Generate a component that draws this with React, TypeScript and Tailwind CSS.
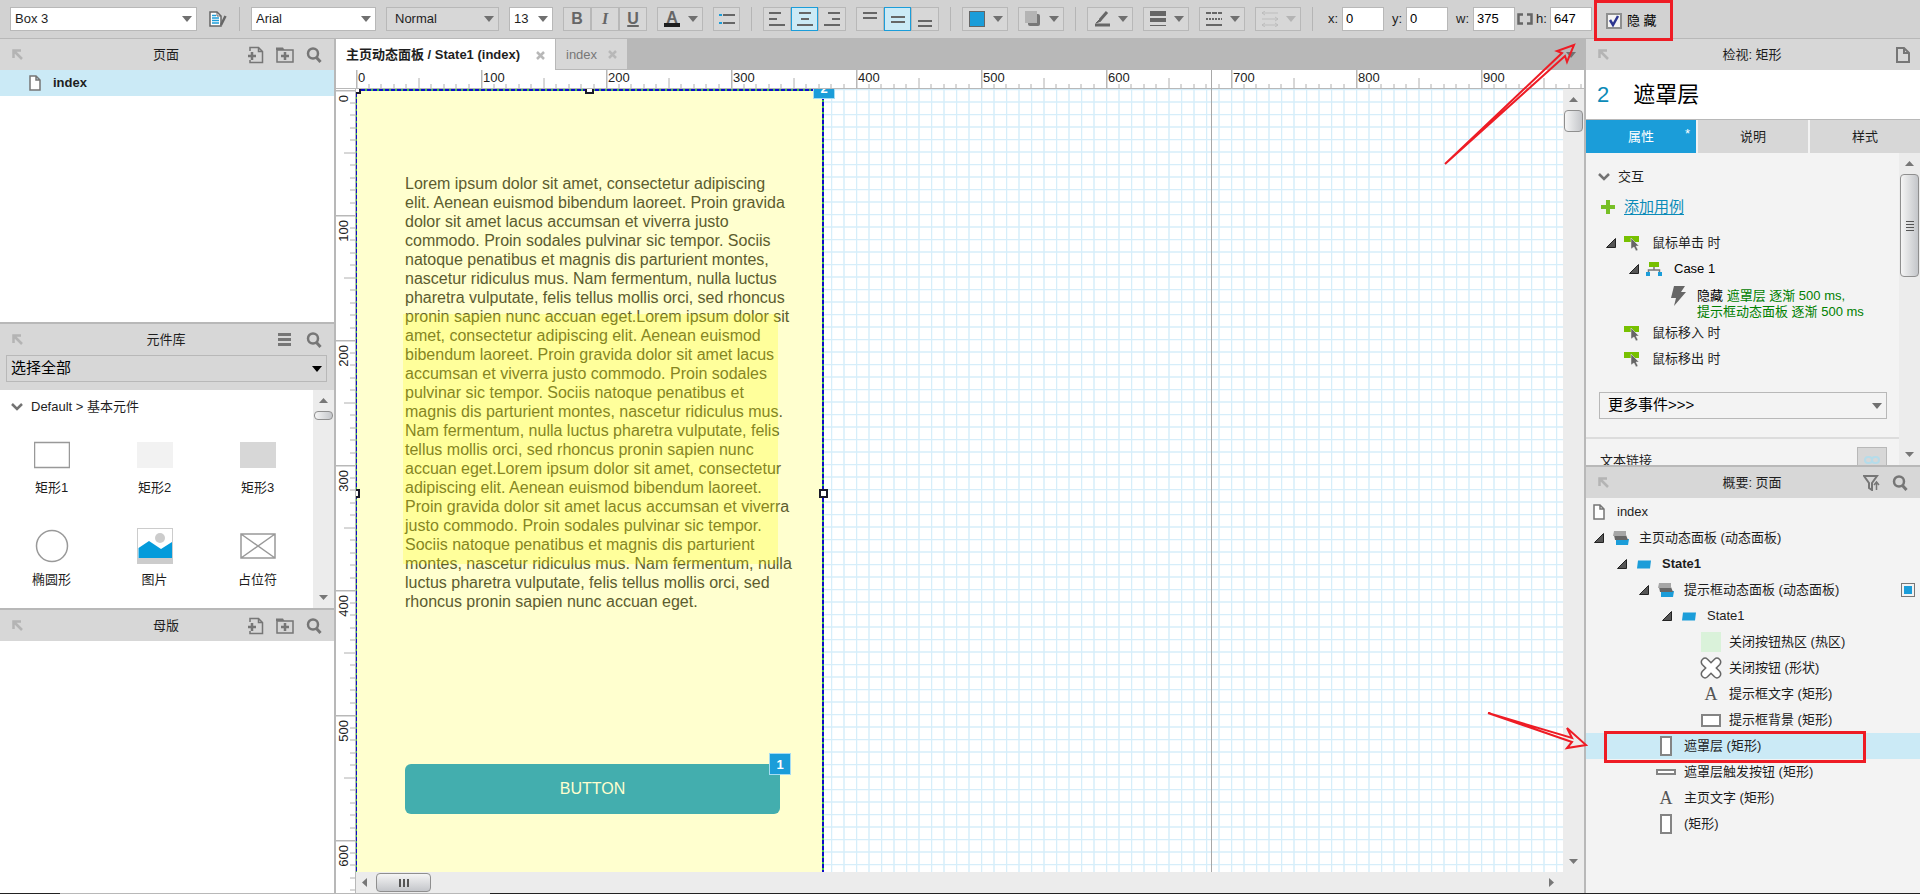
import { ReactNode } from "react";

const TEXT_LINES = [
	"Lorem ipsum dolor sit amet, consectetur adipiscing",
	"elit. Aenean euismod bibendum laoreet. Proin gravida",
	"dolor sit amet lacus accumsan et viverra justo",
	"commodo. Proin sodales pulvinar sic tempor. Sociis",
	"natoque penatibus et magnis dis parturient montes,",
	"nascetur ridiculus mus. Nam fermentum, nulla luctus",
	"pharetra vulputate, felis tellus mollis orci, sed rhoncus",
	"pronin sapien nunc accuan eget.Lorem ipsum dolor sit",
	"amet, consectetur adipiscing elit. Aenean euismod",
	"bibendum laoreet. Proin gravida dolor sit amet lacus",
	"accumsan et viverra justo commodo. Proin sodales",
	"pulvinar sic tempor. Sociis natoque penatibus et",
	"magnis dis parturient montes, nascetur ridiculus mus.",
	"Nam fermentum, nulla luctus pharetra vulputate, felis",
	"tellus mollis orci, sed rhoncus pronin sapien nunc",
	"accuan eget.Lorem ipsum dolor sit amet, consectetur",
	"adipiscing elit. Aenean euismod bibendum laoreet.",
	"Proin gravida dolor sit amet lacus accumsan et viverra",
	"justo commodo. Proin sodales pulvinar sic tempor.",
	"Sociis natoque penatibus et magnis dis parturient",
	"montes, nascetur ridiculus mus. Nam fermentum, nulla",
	"luctus pharetra vulputate, felis tellus mollis orci, sed",
	"rhoncus pronin sapien nunc accuan eget.",
];

/* ---------- icons ---------- */

function Caret({ className = "fill-[#707070]" }: { className?: string }) {
	return (
		<svg width="10" height="6" viewBox="0 0 10 6" className={className}>
			<path d="M0 0h10L5 6z" />
		</svg>
	);
}

function PinIcon() {
	return (
		<svg width="11" height="11" viewBox="0 0 11 11" fill="none" stroke="#b4b4b4" strokeWidth="2.5">
			<path d="M1.5 9V1.5H9M2 2l8 8" />
		</svg>
	);
}

function SearchIcon() {
	return (
		<svg width="16" height="16" viewBox="0 0 16 16" fill="none" stroke="#767676">
			<circle cx="7" cy="6.5" r="5" strokeWidth="2.5" />
			<path d="M10.5 10.5l4 4.5" strokeWidth="3" />
		</svg>
	);
}

function AddPageIcon() {
	return (
		<svg width="16" height="18" viewBox="0 0 16 18" fill="none" stroke="#767676">
			<path d="M2 5V1.5h8.5l4 4v11H2V14M10.5 1.5v4h4" strokeWidth="1.5" />
			<path d="M0 10h8M4 6v8" strokeWidth="2.5" />
		</svg>
	);
}

function AddFolderIcon() {
	return (
		<svg width="18" height="16" viewBox="0 0 18 16" fill="none" stroke="#767676">
			<path d="M1 15V3h16v12z" strokeWidth="1.5" />
			<path d="M0 .5h7L8.500 3H0z" fill="#767676" stroke="none" />
			<path d="M5 9h8M9 5v8" strokeWidth="2.5" />
		</svg>
	);
}

function PageIcon() {
	return (
		<svg width="12" height="16" viewBox="0 0 12 16" fill="#fff" stroke="#767676" strokeWidth="1.5">
			<path d="M1 1h6l4 4v10H1zM7 1v4h4" />
		</svg>
	);
}

function Triangle() {
	return (
		<svg width="10" height="10" viewBox="0 0 10 10">
			<path d="M.5 9.5h9V.5z" fill="#555" stroke="#222" />
		</svg>
	);
}

function Chevron() {
	return (
		<svg width="12" height="8" viewBox="0 0 12 8" fill="none" stroke="#737373" strokeWidth="2.5">
			<path d="M1 1l5 5 5-5" />
		</svg>
	);
}

function EventIcon() {
	return (
		<svg width="16" height="16" viewBox="0 0 16 16">
			<path d="M0 1h15v6H0z" fill="#77c000" />
			<path d="M7 3l8 8h-3l2 4-2 1-2-4-3 2z" fill="#666" stroke="#f3f3f3" strokeWidth=".5" />
		</svg>
	);
}

function PanelIcon() {
	return (
		<svg width="16" height="14" viewBox="0 0 16 14">
			<path d="M3 8h13l-1 6H3z" fill="#1b9dd9" />
			<path d="M1 4h12l2 5H2z" fill="#666" />
			<path d="M1 0h12v5H0z" fill="#a6a6a6" />
		</svg>
	);
}

function StateIcon() {
	return (
		<svg width="14" height="9" viewBox="0 0 14 9">
			<path d="M1 .5h13l-1 8H0z" fill="#1b9dd9" />
		</svg>
	);
}

function CrossShape() {
	return (
		<svg width="22" height="22" viewBox="0 0 22 22">
			<path
				d="M7.500 2.200L11 5.700l3.500-3.500c3.300-3 8 1.300 5.300 5.300L16.300 11l3.500 3.500c2.700 4-2 8.300-5.300 5.300L11 16.300l-3.500 3.500c-3.300 3-8-1.300-5.300-5.300L5.700 11 2.200 7.500c-2.700-4 2-8.300 5.300-5.300z"
				fill="#fff"
				stroke="#666"
				strokeWidth="1.5"
			/>
		</svg>
	);
}

function LetterA() {
	return <span className="font-['Liberation_Serif',serif] text-lg leading-5 text-[#555]">A</span>;
}

function RectIcon({ size }: { size: string }) {
	return <i className={"border-2 border-[#848484] bg-white " + size} />;
}

/* ---------- small parts ---------- */

type SelectProps = {
	label: string;
	value: string;
	box: string;
	caret?: string;
};

function Select({ label, value, box, caret }: SelectProps) {
	return (
		<div className={"relative " + box}>
			<select
				aria-label={label}
				className="block w-full h-full appearance-none bg-transparent pl-1 pr-4 outline-none"
			>
				<option>{value}</option>
			</select>
			<span className="absolute right-1 top-0 h-full flex items-center pointer-events-none">
				<Caret className={caret} />
			</span>
		</div>
	);
}

function Divider() {
	return <div className="w-px h-6 mx-px bg-[#b5b5b5]" />;
}

function DropButton({ label, children, dim }: { label: string; children: ReactNode; dim?: boolean }) {
	return (
		<button
			aria-label={label}
			className="w-[46px] h-6 border border-[#b8b8b8] bg-[#d7d7d7] flex items-center justify-between pl-[6px] pr-1"
		>
			{children}
			<Caret className={dim ? "fill-[#b4b4b4]" : "fill-[#707070]"} />
		</button>
	);
}

function GroupButton({ label, active, children }: { label: string; active?: boolean; children: ReactNode }) {
	return (
		<button
			aria-label={label}
			className={
				active
					? "flex-1 h-6 border border-[#1b9dd9] bg-[#cbeaf6] flex items-center justify-center"
					: "flex-1 h-6 border border-[#b8b8b8] bg-[#d7d7d7] flex items-center justify-center"
			}
		>
			{children}
		</button>
	);
}

function Bars({ d }: { d: string }) {
	return (
		<svg width="16" height="16" viewBox="0 0 16 16" fill="none" stroke="#666" strokeWidth="2">
			<path d={d} />
		</svg>
	);
}

function Field({ label, value, labelBox }: { label: string; value: string; labelBox: string }) {
	return (
		<label className="flex items-center">
			<span className={labelBox}>{label}</span>
			<input
				defaultValue={value}
				className="w-[42px] h-6 border border-[#b8b8b8] bg-white pl-[3px] text-black outline-none"
			/>
		</label>
	);
}

function PanelHeader({ title, children }: { title: string; children?: ReactNode }) {
	return (
		<header className="relative shrink-0 h-[31px] bg-[#d7d7d7] flex items-center justify-between px-3">
			<PinIcon />
			<h2 className="absolute inset-x-0 pr-[2px] text-center pointer-events-none">{title}</h2>
			<div className="flex items-center gap-3">{children}</div>
		</header>
	);
}

function ScrollUp() {
	return (
		<svg width="9" height="5" viewBox="0 0 9 5" className="fill-[#777]">
			<path d="M0 5h9L4.500 0z" />
		</svg>
	);
}

function VScroll({ thumb, grip }: { thumb: string; grip?: boolean }) {
	return (
		<div className="w-[21px] shrink-0 bg-[#ececec] flex flex-col items-center pt-2 pb-2">
			<ScrollUp />
			<div
				className={
					"w-[19px] mt-2 rounded-sm border border-[#8f8f8f] bg-linear-to-r from-[#f5f5f5] to-[#c4c6ca] flex flex-col items-center justify-center gap-[2px] " +
					thumb
				}
			>
				{grip && (
					<>
						<i className="w-2 h-px bg-[#555]" />
						<i className="w-2 h-px bg-[#555]" />
						<i className="w-2 h-px bg-[#555]" />
						<i className="w-2 h-px bg-[#555]" />
					</>
				)}
			</div>
			<div className="mt-auto rotate-180">
				<ScrollUp />
			</div>
		</div>
	);
}

/* ---------- toolbar ---------- */

function Toolbar() {
	return (
		<div className="h-[39px] shrink-0 bg-[#d2d2d2] border-b border-[#b8b8b8] flex items-center gap-[10px] pl-[10px] pb-px whitespace-nowrap">
			<Select label="Style" value="Box 3" box="w-[187px] h-6 shrink-0 border border-[#b8b8b8] bg-white" />
			<button aria-label="Edit style" className="w-[21px] flex justify-center">
				<svg width="18" height="16" viewBox="0 0 18 16" fill="none">
					<path d="M1 1h7l4 4v10H1z" fill="#fff" stroke="#666" strokeWidth="1.5" />
					<path d="M3 4.500h4M3 7h7M3 9.500h7M3 12h7" stroke="#1b9dd9" strokeWidth="1.5" />
					<path d="M8 1v4h4" stroke="#666" />
					<path d="M16.500 5L12 14" stroke="#666" strokeWidth="2.5" />
				</svg>
			</button>
			<Divider />
			<Select label="Font" value="Arial" box="w-[125px] h-6 shrink-0 border border-[#b8b8b8] bg-white" />
			<Select
				label="Weight"
				value="Normal"
				box="w-[113px] h-6 pl-1 shrink-0 border border-[#b8b8b8] bg-[#d7d7d7]"
			/>
			<Select label="Size" value="13" box="w-11 h-6 shrink-0 border border-[#b8b8b8] bg-white" />
			<div className="w-[84px] flex text-base font-bold text-[#666]">
				<GroupButton label="Bold">B</GroupButton>
				<GroupButton label="Italic">
					<span className="font-['Liberation_Serif',serif] italic">I</span>
				</GroupButton>
				<GroupButton label="Underline">
					<span className="underline decoration-2">U</span>
				</GroupButton>
			</div>
			<DropButton label="Text colour">
				<span className="w-4 h-[17px] leading-[15px] text-center text-base font-bold text-[#666] border-b-4 border-[#1e1e1e]">
					A
				</span>
			</DropButton>
			<div className="w-[27px] flex">
				<GroupButton label="Bullets">
					<svg width="16" height="12" viewBox="0 0 16 12" fill="none" strokeWidth="2">
						<path d="M0 2h3M0 10h3" stroke="#1b9dd9" />
						<path d="M4 2h12M4 10h12" stroke="#666" />
					</svg>
				</GroupButton>
			</div>
			<Divider />
			<div className="w-[83px] flex">
				<GroupButton label="Align left">
					<Bars d="M0 2h12M0 8h8M0 14h16" />
				</GroupButton>
				<GroupButton label="Align centre" active>
					<Bars d="M2 2h12M4 8h8M0 14h16" />
				</GroupButton>
				<GroupButton label="Align right">
					<Bars d="M4 2h12M8 8h8M0 14h16" />
				</GroupButton>
			</div>
			<div className="w-[83px] flex">
				<GroupButton label="Align top">
					<Bars d="M1 2h14M1 7h14" />
				</GroupButton>
				<GroupButton label="Align middle" active>
					<Bars d="M1 6h14M1 11h14" />
				</GroupButton>
				<GroupButton label="Align bottom">
					<Bars d="M1 10h14M1 15h14" />
				</GroupButton>
			</div>
			<Divider />
			<DropButton label="Fill">
				<span className="w-4 h-4 border border-[#666] bg-[#1b9dd9]" />
			</DropButton>
			<DropButton label="Shadow">
				<svg width="16" height="16" viewBox="0 0 16 16">
					<rect x="3" y="3" width="12" height="12" rx="2" fill="#777" />
					<path d="M0 0h12v12H0z" fill="#b4b4b4" />
				</svg>
			</DropButton>
			<Divider />
			<DropButton label="Line colour">
				<svg width="17" height="16" viewBox="0 0 17 16" fill="none" stroke="#666">
					<path d="M13 1L6 9" strokeWidth="3" />
					<path d="M6 8l-4 4 5-2z" fill="#666" />
					<path d="M1 14h15" strokeWidth="3" />
				</svg>
			</DropButton>
			<DropButton label="Line width">
				<svg width="16" height="16" viewBox="0 0 16 16" fill="#666">
					<path d="M0 0h16v5H0zM0 7h16v4H0zM0 14h16v1H0z" />
				</svg>
			</DropButton>
			<DropButton label="Line style">
				<svg width="16" height="16" viewBox="0 0 16 16" fill="none" stroke="#666" strokeWidth="2">
					<path d="M0 2h16" strokeDasharray="5 1" />
					<path d="M0 8h16" strokeDasharray="2 1" />
					<path d="M0 14h16" />
				</svg>
			</DropButton>
			<DropButton label="Arrow style" dim>
				<svg width="16" height="16" viewBox="0 0 16 16" fill="none" stroke="#bdbdbd">
					<path d="M0 2h16M3 0L0 2l3 2M0 8h16M13 6l3 2-3 2M0 14h16M3 12l-3 2 3 2M13 12l3 2-3 2" />
				</svg>
			</DropButton>
			<Divider />
			<div className="flex items-center gap-2 pl-1">
				<Field label="x:" value="0" labelBox="w-[14px]" />
				<Field label="y:" value="0" labelBox="w-[14px]" />
				<div className="flex items-center">
					<Field label="w:" value="375" labelBox="w-[17px]" />
					<svg
						width="16"
						height="12"
						viewBox="0 0 16 12"
						fill="none"
						stroke="#666"
						strokeWidth="2.5"
						className="ml-[2px] mr-[3px]"
					>
						<path d="M6 1.500H1.500v9H6M10 1.500h4.500v9H10" />
					</svg>
					<Field label="h:" value="647" labelBox="w-[14px]" />
				</div>
			</div>
			<label className="relative z-20 -ml-2 mt-1 w-[79px] h-[41px] shrink-0 border-3 border-[#ee1c25] flex items-center gap-[5px] pl-[9px] text-black">
				<span className="relative w-4 h-4">
					<input
						type="checkbox"
						defaultChecked
						className="block w-4 h-4 appearance-none border-2 border-[#8e8f8f] bg-[#f4f4f4]"
					/>
					<svg width="16" height="16" viewBox="0 0 16 16" className="absolute inset-0 pointer-events-none">
						<path d="M4 7l3 5 5-9" fill="none" stroke="#2c3590" strokeWidth="2.5" />
					</svg>
				</span>
				隐 藏
			</label>
		</div>
	);
}

/* ---------- left column ---------- */

const WIDGETS = [
	{
		name: "矩形1",
		art: <rect x=".5" y="6.5" width="35" height="25" fill="#fff" stroke="#999" strokeWidth="1.5" />,
	},
	{ name: "矩形2", art: <rect y="6" width="36" height="26" fill="#f2f2f2" /> },
	{ name: "矩形3", art: <rect y="6" width="36" height="26" fill="#d7d7d7" /> },
	{ name: "椭圆形", art: <circle cx="18" cy="18" r="15.5" fill="#fff" stroke="#999" strokeWidth="1.5" /> },
	{
		name: "图片",
		art: (
			<>
				<rect x=".5" y=".5" width="35" height="35" fill="#fff" stroke="#ccc" />
				<path d="M1 30h34v5H1z" fill="#ccc" />
				<path d="M1.500 20L12 13l12 8 11-7v16H1.500z" fill="#049bdb" />
				<circle cx="23" cy="10" r="5" fill="#ccc" />
			</>
		),
	},
	{
		name: "占位符",
		art: <path d="M1 6h34v24H1zM1 6l34 24M35 6L1 30" fill="#fff" stroke="#999" strokeWidth="1.5" />,
	},
];

function LeftColumn() {
	return (
		<aside className="w-[336px] shrink-0 border-r-2 border-[#b8b8b8] flex flex-col">
			<section className="h-[285px] shrink-0 border-b-2 border-[#b8b8b8]">
				<PanelHeader title="页面">
					<AddPageIcon />
					<AddFolderIcon />
					<SearchIcon />
				</PanelHeader>
				<div className="h-[26px] bg-[#cbeaf6] flex items-center gap-3 pl-[29px] font-bold">
					<PageIcon />
					index
				</div>
			</section>
			<section className="h-[286px] shrink-0 border-b-2 border-[#b8b8b8] flex flex-col">
				<PanelHeader title="元件库">
					<svg
						width="13"
						height="13"
						viewBox="0 0 13 13"
						fill="none"
						stroke="#767676"
						strokeWidth="3"
						className="mr-[3px]"
					>
						<path d="M0 1.500h13M0 6.500h13M0 11.500h13" />
					</svg>
					<SearchIcon />
				</PanelHeader>
				<div className="bg-[#d7d7d7] pl-[6px] pr-[7px] pb-2">
					<Select
						label="Library"
						value="选择全部"
						box="h-[27px] border border-[#b8b8b8] text-[15px] text-black"
						caret="fill-black"
					/>
				</div>
				<div className="flex-1 flex bg-white">
					<div className="flex-1 pt-2">
						<div className="h-[18px] flex items-center gap-2 pl-[11px]">
							<Chevron />
							Default &gt; 基本元件
						</div>
						<div className="grid grid-cols-3 gap-y-7 pt-5 pr-1">
							{WIDGETS.map((w) => (
								<figure key={w.name} className="h-16 flex flex-col items-center justify-between">
									<svg width="36" height="36" viewBox="0 0 36 36">
										{w.art}
									</svg>
									<figcaption className="leading-6">{w.name}</figcaption>
								</figure>
							))}
						</div>
					</div>
					<VScroll thumb="h-[9px]" />
				</div>
			</section>
			<section className="flex-1 bg-white">
				<PanelHeader title="母版">
					<AddPageIcon />
					<AddFolderIcon />
					<SearchIcon />
				</PanelHeader>
			</section>
		</aside>
	);
}

/* ---------- canvas ---------- */

const MARKS = [0, 100, 200, 300, 400, 500, 600, 700, 800, 900];

// 100 canvas units take 125 pixels
function TopRuler() {
	return (
		<svg width="100%" height="19" className="block">
			<defs>
				<pattern id="rt" x="20" width="125" height="19" patternUnits="userSpaceOnUse">
					<path
						d="M13 14v5M25 14v5M38 14v5M50 14v5M75 14v5M88 14v5M100 14v5M113 14v5M63 8v11"
						stroke="#b0b0b0"
					/>
					<path d="M.5 0v19" stroke="#b8b8b8" strokeWidth="2" />
				</pattern>
			</defs>
			<rect x="19" width="100%" height="19" fill="url(#rt)" />
			<path d="M0 18.500h2000" stroke="#b8b8b8" />
			{MARKS.map((m) => (
				<text key={m} x={22 + m * 1.25} y="12" fontSize="13" fill="#222">
					{m}
				</text>
			))}
		</svg>
	);
}

function SideRuler() {
	return (
		<svg width="20" height="100%" className="block shrink-0">
			<defs>
				<pattern id="rl" y="1" width="20" height="125" patternUnits="userSpaceOnUse">
					<path
						d="M14 13h5M14 25h5M14 38h5M14 50h5M14 75h5M14 88h5M14 100h5M14 113h5M8 63h11"
						stroke="#b0b0b0"
					/>
					<path d="M0 .5h19" stroke="#b8b8b8" strokeWidth="2" />
				</pattern>
			</defs>
			<rect width="20" height="100%" fill="url(#rl)" />
			<path d="M19.500 0v2000" stroke="#b8b8b8" />
			{MARKS.slice(0, 7).map((m) => (
				<text
					key={m}
					transform={`translate(12 ${6 + m * 1.25}) rotate(-90)`}
					textAnchor="end"
					fontSize="13"
					fill="#222"
				>
					{m}
				</text>
			))}
		</svg>
	);
}

function Handle({ place }: { place: string }) {
	return <i className={"absolute w-[9px] h-[9px] border-2 border-[#1a1a2a] bg-white " + place} />;
}

function Badge({ n, place }: { n: number; place: string }) {
	return (
		<span
			className={
				"absolute w-[22px] h-[22px] border border-[#a5dcf3] bg-[#1b9dd9] text-white font-bold text-center leading-[22px] " +
				place
			}
		>
			{n}
		</span>
	);
}

function Canvas() {
	return (
		<div className="relative flex-1 overflow-hidden bg-white">
			{/* grid */}
			<svg width="100%" height="100%" className="absolute inset-0">
				<defs>
					<pattern id="grid" width="25" height="25" patternUnits="userSpaceOnUse">
						<path d="M0 .5h25M0 13h25M.5 0v25M13 0v25" stroke="#d6eefa" strokeWidth="1.5" />
					</pattern>
				</defs>
				<rect width="100%" height="100%" fill="url(#grid)" />
			</svg>

			<div className="absolute left-0 top-0 w-[468px] h-[809px] bg-[#ffffcf]">
				<p className="absolute left-[49px] top-[85px] whitespace-pre text-base leading-[19px] text-[#5c5c2e]">
					{TEXT_LINES.join("\n")}
				</p>
				<div className="absolute left-[47px] top-[225px] w-[375px] h-[250px] bg-[#ffff00]/25" />
				<button className="absolute left-[49px] top-[675px] w-[375px] h-[50px] rounded-md bg-[#43aeae] text-base text-[#ffffcf]">
					BUTTON
				</button>
				<Badge n={1} place="left-[413px] top-[664px]" />
				<svg width="470" height="810" className="absolute left-0 top-0 overflow-visible" fill="none">
					<path d="M0 800V1h467v799" stroke="#3fbf4f" strokeWidth="2" />
					<path d="M0 800V1h467v799" stroke="#0d0dc8" strokeWidth="2" strokeDasharray="4 2" />
				</svg>
				<Handle place="-left-1 -top-1" />
				<Handle place="left-[229px] -top-1" />
				<Handle place="-left-[5px] top-[400px]" />
				<Handle place="left-[463px] top-[400px]" />
				<Badge n={2} place="left-[457px] -top-3" />
			</div>
		</div>
	);
}

function CloseX() {
	return (
		<svg width="9" height="9" viewBox="0 0 9 9" stroke="#b8b8b8" strokeWidth="2.5">
			<path d="M1 1l7 7M8 1L1 8" />
		</svg>
	);
}

function Center() {
	return (
		<main className="relative flex-1 min-w-0 flex flex-col">
			<nav className="h-[31px] shrink-0 bg-[#b8b8b8] flex pr-2">
				<button className="w-[219px] bg-white flex items-center justify-between px-[10px] pt-px font-bold whitespace-nowrap">
					主页动态面板 / State1 (index)
					<CloseX />
				</button>
				<button className="w-[72px] bg-[#d7d7d7] border-l border-b border-[#b8b8b8] flex items-center justify-between px-[10px] pt-px text-[#777]">
					index
					<CloseX />
				</button>
				<span className="ml-auto flex items-center">
					<Caret />
				</span>
			</nav>
			<div className="relative flex-1 flex flex-col bg-white min-h-0">
				<TopRuler />
				<div className="flex-1 flex min-h-0">
					<SideRuler />
					<div className="flex-1 flex flex-col min-w-0">
						<div className="flex-1 flex min-h-0">
							<Canvas />
							<VScroll thumb="h-[22px]" />
						</div>
						<div className="h-[21px] shrink-0 bg-[#ececec] flex items-center justify-between pl-1 pr-7">
							<div className="flex items-center gap-[7px]">
								<span className="-rotate-90">
									<ScrollUp />
								</span>
								<div className="w-[55px] h-[19px] rounded-sm border border-[#8f8f8f] bg-linear-to-b from-[#f5f5f5] to-[#c4c6ca] flex items-center justify-center gap-[2px]">
									<i className="w-[2px] h-2 bg-[#555]" />
									<i className="w-[2px] h-2 bg-[#555]" />
									<i className="w-[2px] h-2 bg-[#555]" />
								</div>
							</div>
							<span className="rotate-90">
								<ScrollUp />
							</span>
						</div>
					</div>
				</div>
				{/* page guide */}
				<i className="absolute left-[875px] top-0 bottom-[21px] w-px bg-[#a8a8a8]" />
			</div>
			<svg
				width="160"
				height="770"
				viewBox="0 0 160 770"
				className="absolute right-[-4px] top-0 z-10 pointer-events-none overflow-visible"
				fill="none"
				stroke="#ee1c25"
				strokeWidth="2"
			>
				<path d="M17 125L134 14l-5-2 17-6-7 17-2-6z" />
				<path d="M60 674l84 25-5-10 19 17-19 3 5-6z" />
			</svg>
		</main>
	);
}

/* ---------- right column ---------- */

type OutlineRow = {
	pad: string;
	icon: ReactNode;
	text: string;
	open?: boolean;
	bold?: boolean;
	mark?: boolean;
	selected?: boolean;
};

const OUTLINE: OutlineRow[] = [
	{ pad: "pl-px", icon: <PageIcon />, text: "index" },
	{ pad: "pl-2", open: true, icon: <PanelIcon />, text: "主页动态面板 (动态面板)" },
	{ pad: "pl-[31px]", open: true, icon: <StateIcon />, text: "State1", bold: true },
	{ pad: "pl-[53px]", open: true, icon: <PanelIcon />, text: "提示框动态面板 (动态面板)", mark: true },
	{ pad: "pl-[76px]", open: true, icon: <StateIcon />, text: "State1" },
	{ pad: "pl-[113px]", icon: <i className="w-5 h-5 bg-[#daf2da]" />, text: "关闭按钮热区 (热区)" },
	{ pad: "pl-[113px]", icon: <CrossShape />, text: "关闭按钮 (形状)" },
	{ pad: "pl-[113px]", icon: <LetterA />, text: "提示框文字 (矩形)" },
	{ pad: "pl-[113px]", icon: <RectIcon size="w-5 h-[13px]" />, text: "提示框背景 (矩形)" },
	{ pad: "pl-[68px]", icon: <RectIcon size="w-3 h-5" />, text: "遮罩层 (矩形)", selected: true },
	{ pad: "pl-[68px]", icon: <RectIcon size="w-5 h-[6px]" />, text: "遮罩层触发按钮 (矩形)" },
	{ pad: "pl-[68px]", icon: <LetterA />, text: "主页文字 (矩形)" },
	{ pad: "pl-[68px]", icon: <RectIcon size="w-3 h-5" />, text: "(矩形)" },
];

function Inspector() {
	return (
		<section className="h-[428px] shrink-0 flex flex-col border-b-2 border-[#b8b8b8]">
			<PanelHeader title="检视: 矩形">
				<svg
					width="14"
					height="16"
					viewBox="0 0 14 16"
					fill="none"
					stroke="#767676"
					strokeWidth="2"
					className="-mr-[2px]"
				>
					<path d="M1 1h7l5 5v9H1zM8 1v5h5" />
				</svg>
			</PanelHeader>
			<div className="h-[50px] shrink-0 bg-white border-b border-[#b8b8b8] flex items-center gap-6 pl-[11px] text-[22px] text-black">
				<span className="text-[#0b8bb8]">2</span>
				遮罩层
			</div>
			<div className="h-[33px] shrink-0 grid grid-cols-3 gap-[2px] bg-[#f3f3f3]">
				<button className="relative bg-[#1b9dd9] text-white">
					属性<span className="absolute right-[6px] top-1">*</span>
				</button>
				<button className="bg-[#d7d7d7]">说明</button>
				<button className="bg-[#d7d7d7]">样式</button>
			</div>
			<div className="flex-1 flex min-h-0">
				<div className="flex-1 min-w-0 overflow-hidden pt-[14px]">
					<div className="h-5 flex items-center gap-2 pl-3">
						<Chevron />
						交互
					</div>
					<div className="h-10 flex items-center gap-[9px] pl-[15px] text-[15px]">
						<svg width="14" height="14" viewBox="0 0 14 14" stroke="#77bf26" strokeWidth="4">
							<path d="M0 7h14M7 0v14" />
						</svg>
						<a href="#" className="text-[#0b8bb8] underline underline-offset-2">
							添加用例
						</a>
					</div>
					<div className="h-[26px] mt-[3px] flex items-center pl-5">
						<Triangle />
						<span className="w-4 ml-2 mr-3">
							<EventIcon />
						</span>
						鼠标单击 时
					</div>
					<div className="h-[26px] flex items-center pl-[43px] text-black">
						<Triangle />
						<svg width="16" height="14" viewBox="0 0 16 14" className="ml-[7px] mr-3">
							<path d="M8 4v4M2.500 11V8h11v3" fill="none" stroke="#777" strokeWidth="1.5" />
							<path d="M3 0h10v5H3z" fill="#77c000" />
							<path d="M0 10h4v4H0zM12 10h4v4h-4z" fill="#1b9dd9" />
						</svg>
						Case 1
					</div>
					<div className="flex pl-[84px] pt-[6px] leading-4 whitespace-nowrap">
						<svg width="16" height="20" viewBox="0 0 16 20" className="mr-[11px] -mt-[2px] shrink-0">
							<path d="M4 0h11l-4 6h5L4 20l2-8H1z" fill="#666" />
						</svg>
						<p className="text-[#008000]">
							<span className="text-black">隐藏</span> 遮罩层 逐渐 500 ms,
							<br />
							提示框动态面板 逐渐 500 ms
						</p>
					</div>
					<div className="h-[26px] flex items-center gap-3 pl-[38px]">
						<EventIcon />
						鼠标移入 时
					</div>
					<div className="h-[26px] flex items-center gap-3 pl-[38px]">
						<EventIcon />
						鼠标移出 时
					</div>
					<div className="pl-[13px] pr-3 pt-5">
						<Select
							label="More events"
							value="更多事件>>>"
							box="h-[27px] pl-1 border border-[#b8b8b8] text-[15px] text-black"
						/>
					</div>
					<div className="mt-[18px] border-t-2 border-[#dcdcdc] pt-2 pl-[14px] pr-3 flex justify-between">
						<span className="pt-1">文本链接</span>
						<button
							aria-label="Link"
							className="w-[30px] h-[26px] border border-[#b8b8b8] bg-[#d7d7d7] flex items-center justify-center"
						>
							<svg width="16" height="8" viewBox="0 0 16 8" fill="none" stroke="#b5dcea" strokeWidth="2">
								<rect x="1" y="1" width="7" height="6" rx="3" />
								<rect x="8" y="1" width="7" height="6" rx="3" />
							</svg>
						</button>
					</div>
				</div>
				<VScroll thumb="h-[103px]" grip />
			</div>
		</section>
	);
}

function RightColumn() {
	return (
		<aside className="w-[336px] shrink-0 border-l-2 border-[#b8b8b8] bg-[#f3f3f3] flex flex-col">
			<Inspector />
			<PanelHeader title="概要: 页面">
				<svg width="17" height="16" viewBox="0 0 17 16" fill="none" stroke="#767676">
					<path d="M1 1h13L9 8v7l-3-2V8z" strokeWidth="2" />
					<path d="M13.500 15V8M11 10l2.500-3L16 10" strokeWidth="1.5" />
				</svg>
				<SearchIcon />
			</PanelHeader>
			<ul className="pt-px">
				{OUTLINE.map((row, i) => (
					<li
						key={i}
						className={
							"relative h-[26px] flex items-center whitespace-nowrap " +
							row.pad +
							(row.selected ? " bg-[#cbeaf6]" : "") +
							(row.bold ? " font-bold" : "")
						}
					>
						{row.open && (
							<span className="mr-[5px]">
								<Triangle />
							</span>
						)}
						<span className="w-6 mr-[6px] flex justify-center">{row.icon}</span>
						{row.text}
						{row.mark && (
							<i className="ml-auto mr-[5px] w-[14px] h-[14px] border border-[#777] p-[2px]">
								<i className="block w-full h-full bg-[#1b9dd9]" />
							</i>
						)}
						{row.selected && (
							<i className="absolute left-[18px] -top-[2px] w-[262px] h-8 border-3 border-[#ee1c25]" />
						)}
					</li>
				))}
			</ul>
		</aside>
	);
}

function App() {
	return (
		<div className="h-screen flex flex-col overflow-hidden bg-white font-['Liberation_Sans','Noto_Sans_CJK_SC',sans-serif] text-[13px] text-[#1e1e1e]">
			<Toolbar />
			<div className="flex-1 flex min-h-0">
				<LeftColumn />
				<Center />
				<RightColumn />
			</div>
			<div className="h-px shrink-0 flex bg-[#222]">
				<i className="ml-[60px] w-[430px] bg-[#b8b8b8]" />
			</div>
		</div>
	);
}

export default App;
